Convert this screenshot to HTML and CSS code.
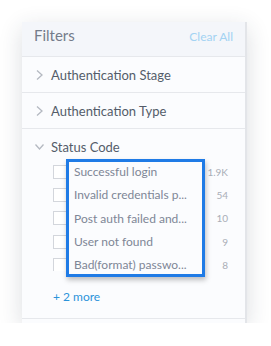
FILE: index.html
```html
<!DOCTYPE html>
<html lang="en">
<head>
  <meta charset="UTF-8" />
  <title>Filters</title>
  <link rel="stylesheet" href="styles.css">
</head>
<body>

  <div class="panel">
    <div class="panel-head">
      <span class="panel-title">Filters</span>
      <a class="clear-all" href="#">Clear All</a>
    </div>

    <div class="group">
      <svg class="chev" width="9" height="12" viewBox="0 0 9 12"><path d="M2 1.5 L7 6 L2 10.5" fill="none" stroke="#b4b9c1" stroke-width="1.3"/></svg>
      <span>Authentication Stage</span>
    </div>

    <div class="group">
      <svg class="chev" width="9" height="12" viewBox="0 0 9 12"><path d="M2 1.5 L7 6 L2 10.5" fill="none" stroke="#b4b9c1" stroke-width="1.3"/></svg>
      <span>Authentication Type</span>
    </div>

    <div class="section">
      <div class="section-title">
        <svg class="chev" width="9" height="12" viewBox="0 0 9 12"><path d="M0.5 3.5 L4.5 8 L8.5 3.5" fill="none" stroke="#b4b9c1" stroke-width="1.3"/></svg>
        <span>Status Code</span>
      </div>

      <div class="options-wrap">
        <div class="options">
          <label class="option"><span class="box"></span><span class="name">Successful login</span><span class="count">1.9K</span></label>
          <label class="option"><span class="box"></span><span class="name">Invalid credentials p...</span><span class="count">54</span></label>
          <label class="option"><span class="box"></span><span class="name">Post auth failed and...</span><span class="count">10</span></label>
          <label class="option"><span class="box"></span><span class="name">User not found</span><span class="count">9</span></label>
          <label class="option"><span class="box"></span><span class="name">Bad(format) passwo...</span><span class="count">8</span></label>
        </div>
        <div class="highlight"></div>
      </div>

      <a class="more" href="#">+ 2 more</a>
    </div>
  </div>

</body>
</html>
```

FILE: styles.css
```css
body {
  margin: 0;
  background-color: #ffffff;
  font-family: 'Lato', 'Open Sans', sans-serif;
}

a {
  text-decoration: none;
}

.panel {
  margin: 22px 0 0 22px;
  width: 223px;
  height: 301px;
  background-color: #fbfcfe;
  border-right: 2px solid #e3e5e9;
  box-shadow: 0 6px 22px rgba(40, 50, 70, 0.16);
  overflow: hidden;
}

.panel-head {
  display: flex;
  align-items: baseline;
  justify-content: space-between;
  height: 30px;
  padding: 4px 12px 0;
  background-color: #f4f6fa;
  border-bottom: 1px solid #e6e8ec;
}

.panel-title {
  font-size: 15px;
  line-height: 18px;
  color: #747c8a;
}

.clear-all {
  font-size: 12px;
  color: #a3d3f3;
}

.group {
  display: flex;
  align-items: center;
  height: 35px;
  padding-left: 13px;
  border-bottom: 1px solid #e6e8ec;
  font-size: 13px;
  color: #545c6a;
}

.chev {
  margin-right: 7px;
}

.section {
  padding: 9px 0 12px;
  border-bottom: 1px solid #e6e8ec;
}

.section-title {
  display: flex;
  align-items: center;
  height: 18px;
  padding-left: 13px;
  font-size: 13px;
  color: #545c6a;
}

.options-wrap {
  position: relative;
  margin-top: 4px;
}

.options {
  height: 111px;
  overflow: hidden;
}

.option {
  display: flex;
  align-items: center;
  height: 23.3px;
  padding: 0 17px 0 31px;
  font-size: 12px;
  color: #7e8696;
}

.box {
  width: 12px;
  height: 12px;
  margin-right: 7px;
  border: 1px solid #d3d6dc;
  background-color: #ffffff;
  flex-shrink: 0;
}

.name {
  flex: 1;
  white-space: nowrap;
}

.count {
  font-size: 10px;
  color: #a9aeb7;
}

.highlight {
  position: absolute;
  left: 44px;
  top: -1px;
  width: 133px;
  height: 112px;
  border: 3px solid #1f7be6;
  box-shadow: 1px 3px 5px rgba(0, 0, 0, 0.25);
}

.more {
  display: block;
  margin: 17px 0 0 31px;
  line-height: 18px;
  font-size: 12px;
  color: #2b93da;
}
```
